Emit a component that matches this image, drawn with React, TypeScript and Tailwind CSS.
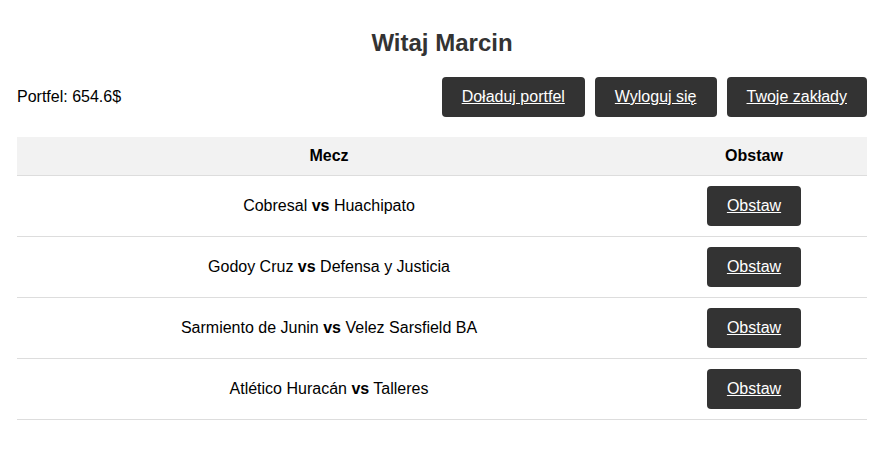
const matches = [
  { home: "Cobresal", away: "Huachipato" },
  { home: "Godoy Cruz", away: "Defensa y Justicia" },
  { home: "Sarmiento de Junin", away: "Velez Sarsfield BA" },
  { home: "Atlético Huracán", away: "Talleres" },
];

const btn =
  "inline-block h-10 rounded bg-[#333] px-5 text-base leading-10 text-white underline";

export default function App() {
  return (
    <div className="min-h-screen bg-white font-['Liberation_Sans',Arial,sans-serif] text-black">
      <div className="ml-[17px] w-[850px] pt-[29px]">
        <h1 className="text-center text-2xl font-bold leading-7 text-[#333]">Witaj Marcin</h1>

        <div className="mt-5 flex items-center justify-between">
          <p className="text-base">Portfel: 654.6$</p>
          <div className="flex gap-2.5">
            <a href="#" className={btn}>Doładuj portfel</a>
            <a href="#" className={btn}>Wyloguj się</a>
            <a href="#" className={btn}>Twoje zakłady</a>
          </div>
        </div>

        <table className="mt-5 w-full border-collapse text-base">
          <thead>
            <tr className="bg-[#f2f2f2]">
              <th className="w-[624px] border-b border-[#ddd] px-2.5 py-2.5 text-center font-bold leading-[18px]">Mecz</th>
              <th className="border-b border-[#ddd] px-2.5 py-2.5 text-center font-bold leading-[18px]">Obstaw</th>
            </tr>
          </thead>
          <tbody>
            {matches.map((m) => (
              <tr key={m.home}>
                <td className="border-b border-[#ddd] px-2.5 py-2.5 text-center">
                  {m.home} <b>vs</b> {m.away}
                </td>
                <td className="border-b border-[#ddd] px-2.5 py-2.5 text-center">
                  <a href="#" className={btn}>Obstaw</a>
                </td>
              </tr>
            ))}
          </tbody>
        </table>
      </div>
    </div>
  );
}
